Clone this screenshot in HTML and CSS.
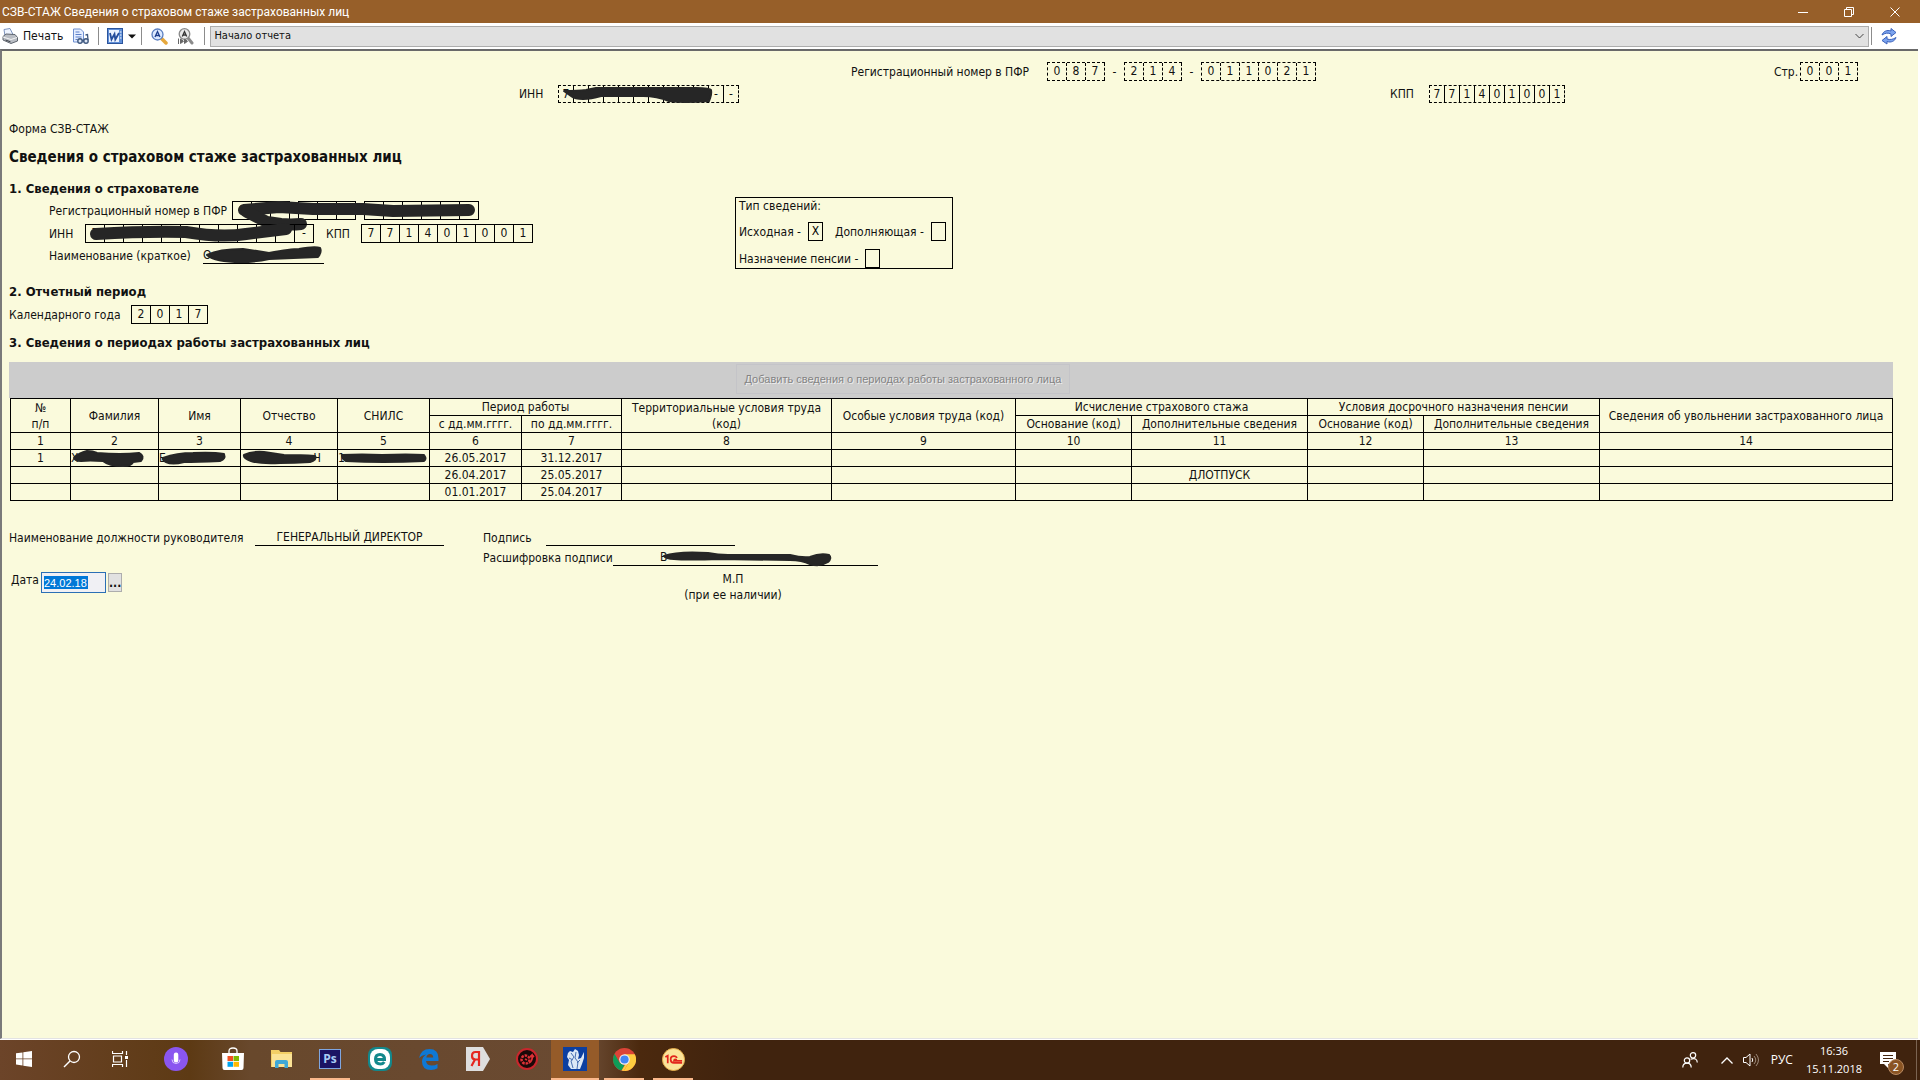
FILE: index.html
```html
<!DOCTYPE html>
<html lang="ru">
<head>
    <meta charset="UTF-8">
    <meta name="viewport" content="width=device-width, initial-scale=1.0">
    <title>СЗВ-СТАЖ Сведения о страховом стаже застрахованных лиц</title>
    <link rel="stylesheet" href="styles.css">
</head>
<body>
    <header class="titlebar">
        <h1>СЗВ-СТАЖ Сведения о страховом стаже застрахованных лиц</h1>
        <div class="window-buttons">
            <button type="button" aria-label="Свернуть"><svg width="12" height="12" viewBox="0 0 12 12"><path d="M1 6.500h10"/></svg></button>
            <button type="button" aria-label="Восстановить"><svg width="12" height="12" viewBox="0 0 12 12"><path d="M1.500 3.500h7v7h-7zM3.500 3.500v-2h7v7h-2"/></svg></button>
            <button type="button" aria-label="Закрыть"><svg width="12" height="12" viewBox="0 0 12 12"><path d="M1.500 1.500l9 9M10.500 1.500l-9 9"/></svg></button>
        </div>
    </header>

    <div class="toolbar">
        <button type="button" class="tool print">
            <svg width="16" height="16" viewBox="0 0 16 16">
                <path d="M3 8L2 1.500l6-1 3 6z" fill="#eef4ff" stroke="#7d93bd"/>
                <path d="M1 8.500L4 6l9 .5 2.500 3v3.500L9 15.500 1 12z" fill="#b9bdc4" stroke="#5f656e"/>
                <path d="M1 9l8 2.500 6-2" fill="none" stroke="#f4f4f4"/>
                <path d="M3.500 12l5 1.800" stroke="#3c4048"/>
            </svg>
            <span>Печать</span>
        </button>
        <button type="button" class="tool preview" aria-label="Просмотр">
            <svg width="17" height="17" viewBox="0 0 17 17">
                <path d="M1.500 1h7l3 3v10h-10z" fill="#e4edff" stroke="#6e8fd0"/>
                <path d="M3.500 4h4M3.500 6.500h6M3.500 9h6M3.500 11.500h2" stroke="#5b7fc9"/>
                <circle cx="8" cy="13" r="2.200" fill="#dfe8f6" stroke="#40597f" stroke-width="1.400"/>
                <circle cx="14" cy="13" r="2.200" fill="#dfe8f6" stroke="#40597f" stroke-width="1.400"/>
                <path d="M10 12.500h2M16 12l-.5-5.500-2 .5" fill="none" stroke="#40597f" stroke-width="1.300"/>
            </svg>
        </button>
        <span class="divider"></span>
        <button type="button" class="tool word" aria-label="Сохранить в Word">
            <svg width="16" height="16" viewBox="0 0 16 16">
                <rect x=".5" y=".5" width="15" height="15" fill="#5f8fd8" stroke="#2b549c"/>
                <rect x="2" y="2" width="10" height="12" fill="#eaf2ff"/>
                <path d="M3 5l1.500 6.500L7.500 6l.8 5.500L12 5" fill="none" stroke="#234c9c" stroke-width="1.800"/>
                <path d="M13 4h1.500M13 7h1.500M13 10h1.500" stroke="#fff"/>
            </svg>
            <svg class="arrow" width="8" height="5" viewBox="0 0 8 5"><path d="M0 .5h8L4 4.500z" fill="#111"/></svg>
        </button>
        <span class="divider"></span>
        <button type="button" class="tool find" aria-label="Найти">
            <svg width="17" height="17" viewBox="0 0 17 17">
                <path d="M10.500 10.500l4.500 4.500" stroke="#e6a83c" stroke-width="3.500" stroke-linecap="round"/>
                <circle cx="6.500" cy="6.500" r="5.500" fill="#dce9ff" stroke="#5c7fc0" stroke-width="1.300"/>
                <path d="M4 9L6.500 3.500 9 9M5 7.500h3" fill="none" stroke="#1c3d8c" stroke-width="1.300"/>
            </svg>
        </button>
        <button type="button" class="tool find" aria-label="Найти далее">
            <svg width="17" height="17" viewBox="0 0 17 17">
                <path d="M11 10l4 5" stroke="#8b8b8b" stroke-width="3" stroke-linecap="round"/>
                <circle cx="7.500" cy="6" r="5.300" fill="#e8e8e8" stroke="#888" stroke-width="1.300"/>
                <path d="M5.300 8.500l2.200-5 2.200 5M6 7h3" fill="none" stroke="#333" stroke-width="1.300"/>
                <path d="M1.500 10.500v5.500M3.500 11l3 2.300-3 2.200zM7.500 11l3 2.300-3 2.200z" fill="#666" stroke="#666"/>
            </svg>
        </button>
        <span class="divider"></span>
        <select class="report-part" aria-label="Раздел отчета">
            <option>Начало отчета</option>
        </select>
        <span class="divider"></span>
        <button type="button" class="tool refresh" aria-label="Обновить">
            <svg width="16" height="17" viewBox="0 0 16 17">
                <path d="M1 7C2 3.500 6 1.500 10 3V.500L15 4.500 10 8.500V6C7 4.500 4 5 1 7z" fill="#7ba3ee" stroke="#3c63bb"/>
                <path d="M15 9.500C14 13 10 15 6 13.500V16L1 12.500 6 8.500V11C9 12 12 11.500 15 9.500z" fill="#7ba3ee" stroke="#3c63bb"/>
            </svg>
        </button>
    </div>

    <main class="report">
        <div class="page-head first">
            <div class="field reg">
                <span class="label">Регистрационный номер в ПФР</span>
                <span class="cells dashed"><i>0</i><i>8</i><i>7</i></span>
                <span class="dash">-</span>
                <span class="cells dashed"><i>2</i><i>1</i><i>4</i></span>
                <span class="dash">-</span>
                <span class="cells dashed"><i>0</i><i>1</i><i>1</i><i>0</i><i>2</i><i>1</i></span>
            </div>
            <div class="field page-number">
                <span class="label">Стр.</span>
                <span class="cells dashed"><i>0</i><i>0</i><i>1</i></span>
            </div>
        </div>
        <div class="page-head second">
            <div class="field code">
                <span class="label">ИНН</span>
                <span class="cells dashed small"><i>7</i><i></i><i></i><i></i><i></i><i></i><i></i><i></i><i></i><i></i><i>-</i><i>-</i>
                    <svg class="scribble" width="180" height="18" viewBox="0 0 180 18"><path d="M5 5q14 0 22-1l10-2h100q14 0 15 2 1 4-2 11-26 2-40 0-12-5-26-5H42q-10 3-18 3-8 0-12-3z"/></svg>
                </span>
            </div>
            <div class="field code">
                <span class="label">КПП</span>
                <span class="cells dashed small"><i>7</i><i>7</i><i>1</i><i>4</i><i>0</i><i>1</i><i>0</i><i>0</i><i>1</i></span>
            </div>
        </div>

        <p class="form-name">Форма СЗВ-СТАЖ</p>
        <h2>Сведения о страховом стаже застрахованных лиц</h2>

        <section class="insurer">
            <div class="insurer-data">
                <h3>1. Сведения о страхователе</h3>
                <div class="field reg">
                    <span class="label">Регистрационный номер в ПФР</span>
                    <span class="cells"><i>0</i><i></i><i></i></span>
                    <span class="cells"><i></i><i></i><i></i></span>
                    <span class="cells"><i></i><i></i><i></i><i></i><i></i><i></i>
                        <svg class="scribble over-reg" width="246" height="30" viewBox="0 0 246 30">
                            <path class="line" d="M11 8L46 5 80 7 130 7 160 9 236 8" stroke-width="11"/>
                            <path class="line" d="M14 10l20 10 14 2q10 1 20 0" stroke-width="9"/>
                        </svg>
                    </span>
                </div>
                <div class="field codes">
                    <span class="label">ИНН</span>
                    <span class="cells"><i>7</i><i></i><i></i><i></i><i></i><i></i><i></i><i></i><i></i><i></i><i></i><i>-</i>
                        <svg class="scribble" width="228" height="19" viewBox="0 0 228 19">
                            <path class="line" d="M10 9q50-3 90-2 35 6 60 2l40-5" stroke-width="11"/>
                        </svg>
                    </span>
                    <span class="label">КПП</span>
                    <span class="cells"><i>7</i><i>7</i><i>1</i><i>4</i><i>0</i><i>1</i><i>0</i><i>0</i><i>1</i></span>
                </div>
                <div class="field short-name">
                    <span class="label">Наименование (краткое)</span>
                    <span class="underline">О
                        <svg class="scribble" width="121" height="17" viewBox="0 0 121 17"><path d="M4 8q12-6 36-6 14 2 26 4 22-4 30-4 16-3 21-1 2 4-2 9-26 1-49 2-14 3-28 3Q12 15 4 8z"/></svg>
                    </span>
                </div>
            </div>
            <fieldset class="info-type">
                <legend>Тип сведений:</legend>
                <div class="type-row">
                    <label for="type-initial">Исходная -</label>
                    <input type="checkbox" id="type-initial" checked>
                    <label for="type-extra">Дополняющая -</label>
                    <input type="checkbox" id="type-extra">
                </div>
                <div class="type-row">
                    <label for="type-pension">Назначение пенсии -</label>
                    <input type="checkbox" id="type-pension">
                </div>
            </fieldset>
        </section>

        <section class="period">
            <h3>2. Отчетный период</h3>
            <div class="field">
                <span class="label">Календарного года</span>
                <span class="cells"><i>2</i><i>0</i><i>1</i><i>7</i></span>
            </div>
        </section>

        <section class="work">
            <h3>3. Сведения о периодах работы застрахованных лиц</h3>
            <div class="add-bar">
                <button type="button" disabled>Добавить сведения о периодах работы застрахованного лица</button>
            </div>
            <table>
                <colgroup>
                    <col><col><col><col><col><col><col><col><col><col><col><col><col><col>
                </colgroup>
                <thead>
                    <tr>
                        <th rowspan="2">№<br>п/п</th>
                        <th rowspan="2">Фамилия</th>
                        <th rowspan="2">Имя</th>
                        <th rowspan="2">Отчество</th>
                        <th rowspan="2">СНИЛС</th>
                        <th colspan="2">Период работы</th>
                        <th rowspan="2">Территориальные условия труда<br>(код)</th>
                        <th rowspan="2">Особые условия труда (код)</th>
                        <th colspan="2">Исчисление страхового стажа</th>
                        <th colspan="2">Условия досрочного назначения пенсии</th>
                        <th rowspan="2">Сведения об увольнении застрахованного лица</th>
                    </tr>
                    <tr>
                        <th>с дд.мм.гггг.</th>
                        <th>по дд.мм.гггг.</th>
                        <th>Основание (код)</th>
                        <th>Дополнительные сведения</th>
                        <th>Основание (код)</th>
                        <th>Дополнительные сведения</th>
                    </tr>
                    <tr>
                        <th>1</th><th>2</th><th>3</th><th>4</th><th>5</th><th>6</th><th>7</th>
                        <th>8</th><th>9</th><th>10</th><th>11</th><th>12</th><th>13</th><th>14</th>
                    </tr>
                </thead>
                <tbody>
                    <tr>
                        <td>1</td>
                        <td class="hidden-name">Х
                            <svg class="scribble" width="88" height="20" viewBox="0 0 88 20"><path d="M3 8Q8 3 16 1q6 0 10 2 24 2 42 0 6 3 2 8l-8 1q-1 4-10 4-14 0-20-5-14-1-22 0-6 0-7-3z"/></svg>
                        </td>
                        <td class="hidden-name">Е
                            <svg class="scribble" width="81" height="20" viewBox="0 0 81 20"><path d="M4 8q14-5 30-5 20-1 31 1 2 5-4 7-24 1-36 1-12 3-18 0-4-2-3-4z"/></svg>
                        </td>
                        <td class="hidden-name end">Ч
                            <svg class="scribble" width="97" height="20" viewBox="0 0 97 20"><path d="M3 5q8-4 20-3l20 3q18 0 31 1 2 4-5 6-16 1-30 1-20 1-29-2-8-3-7-6z"/></svg>
                        </td>
                        <td class="hidden-name">1
                            <svg class="scribble" width="92" height="20" viewBox="0 0 92 20"><path d="M4 5q20-1 40 0 26-1 42 0 3 4 0 6-42 2-78 0-4-2-4-6z"/></svg>
                        </td>
                        <td>26.05.2017</td><td>31.12.2017</td>
                        <td></td><td></td><td></td><td></td><td></td><td></td><td></td>
                    </tr>
                    <tr>
                        <td></td><td></td><td></td><td></td><td></td>
                        <td>26.04.2017</td><td>25.05.2017</td>
                        <td></td><td></td><td></td><td>ДЛОТПУСК</td><td></td><td></td><td></td>
                    </tr>
                    <tr>
                        <td></td><td></td><td></td><td></td><td></td>
                        <td>01.01.2017</td><td>25.04.2017</td>
                        <td></td><td></td><td></td><td></td><td></td><td></td><td></td>
                    </tr>
                </tbody>
            </table>
        </section>

        <section class="signature">
            <div class="position">
                <div class="field">
                    <span class="label">Наименование должности руководителя</span>
                    <span class="underline">ГЕНЕРАЛЬНЫЙ ДИРЕКТОР</span>
                </div>
                <div class="field date">
                    <label for="date">Дата</label>
                    <input type="text" id="date" value="24.02.18">
                    <button type="button" aria-label="Выбрать дату">...</button>
                </div>
            </div>
            <div class="sign">
                <div class="field sign-line">
                    <span class="label">Подпись</span>
                    <span class="underline"></span>
                </div>
                <div class="field full-name">
                    <span class="label">Расшифровка подписи</span>
                    <span class="underline">В
                        <svg class="scribble" width="174" height="18" viewBox="0 0 174 18"><path d="M4 7q14-5 44-3 10 2 20 2h62q12 3 20 2 10-4 19-2 3 3-1 7-8 5-18 2-8-4-20-4l-70-1q-34 1-46 0Q6 10 4 7z"/></svg>
                    </span>
                </div>
                <p>М.П<br>(при ее наличии)</p>
            </div>
        </section>
    </main>

    <footer class="taskbar">
        <div class="apps">
            <button type="button" aria-label="Пуск"><svg width="16" height="16" viewBox="0 0 16 16"><path d="M0 2.300l6.500-.9v6.100H0zM7.300 1.300L16 0v7.500H7.300zM0 8.300h6.500v6.200L0 13.600zM7.300 8.300H16V16l-8.700-1.300z" fill="#fff"/></svg></button>
            <button type="button" aria-label="Поиск"><svg width="18" height="18" viewBox="0 0 18 18"><circle cx="11" cy="7" r="5.500" fill="none" stroke="#fff" stroke-width="1.300"/><path d="M7 11l-6 6" stroke="#fff" stroke-width="1.500"/></svg></button>
            <button type="button" aria-label="Представление задач"><svg width="17" height="16" viewBox="0 0 17 16"><path d="M.5 0v2.500h10V0M.5 16v-2.500h10V16M1.500 5h8v6h-8zM14.500 0v4M14.500 9v7" fill="none" stroke="#fff" stroke-width="1.200"/><path d="M13 5h3v3h-3z" fill="#fff"/></svg></button>
            <button type="button" class="voice" aria-label="Алиса"><svg width="24" height="24" viewBox="0 0 24 24"><circle cx="12" cy="12" r="12" fill="#8a56f0"/><rect x="9.800" y="5.500" width="4.500" height="10" rx="2.200" fill="#fff"/><path d="M8 12.500q0 4 4 4t4-4" fill="none" stroke="#d9c6ff"/></svg></button>
            <button type="button" aria-label="Магазин"><svg width="24" height="24" viewBox="0 0 24 24"><path d="M8 7V4q0-3 4-3t4 3v3" fill="none" stroke="#fff" stroke-width="1.300"/><path d="M1 6h22l-.5 15q0 2-2 2h-17q-2 0-2-2z" fill="#fff"/><path d="M6.500 9H12v5H6.500z" fill="#f25022"/><path d="M12.500 9H18v5h-5.500z" fill="#7fba00"/><path d="M6.500 14.800H12v5H6.500z" fill="#00a4ef"/><path d="M12.500 14.800H18v5h-5.500z" fill="#ffb900"/></svg></button>
            <button type="button" aria-label="Проводник"><svg width="22" height="20" viewBox="0 0 22 20"><path d="M0 1h8l1.500 2H21v15H0z" fill="#f3cf66"/><path d="M1 5h20v13H1z" fill="#fbe396"/><path d="M4 19v-6q0-2 2-2h9q2 0 2 2v6h-3.500v-4h-6v4z" fill="#3fa9d8"/></svg></button>
            <button type="button" class="running" aria-label="Photoshop"><span class="ps">Ps</span></button>
            <button type="button" aria-label="ESET"><svg width="24" height="24" viewBox="0 0 24 24"><rect width="24" height="24" rx="8" fill="#13888c"/><rect x="2" y="2" width="20" height="20" rx="8" fill="#fff"/><path d="M8 12.500h8.500Q16.500 7.500 12 7.500T7.500 12q0 5 5 5 2.500 0 3.800-2" fill="none" stroke="#13888c" stroke-width="3"/></svg></button>
            <button type="button" aria-label="Edge"><svg width="20" height="21" viewBox="0 0 20 21"><path d="M0 9Q2 0 10.500 0 19.500 0 19.500 9.500V12H7q.5 4.500 6 4.500 3 0 5.500-1.500v4.300Q16 21 12 21q-9 0-9-8.500Q3 8 7 5.500 2.500 6 0 9zM7.300 8.500h6.900q0-3.500-3.300-3.500-3 0-3.600 3.500z" fill="#0f78d4"/></svg></button>
            <button type="button" aria-label="Яндекс"><svg width="24" height="24" viewBox="0 0 24 24"><path d="M0 0h17l7 12-7 12H0z" fill="#dedede"/><path d="M13 19V5H9.500Q6 5 6 9q0 3.500 3.500 3.500H13M9 12.500L5.500 19" fill="none" stroke="#e52620" stroke-width="2.200"/></svg></button>
            <button type="button" aria-label="Игровой центр"><svg width="22" height="22" viewBox="0 0 22 22"><circle cx="11" cy="11" r="10" fill="#1b0909" stroke="#c9262c" stroke-width="2"/><circle cx="9.500" cy="11.500" r="4" fill="none" stroke="#dd3136" stroke-width="2.500" stroke-dasharray="2.500 1"/><path d="M9 11l2 1M13 15q4-2 3-8l-2 2M16 7l2 2" fill="none" stroke="#dd3136" stroke-width="1.800"/></svg></button>
            <button type="button" class="running active" aria-label="СЗВ-СТАЖ"><svg width="24" height="24" viewBox="0 0 24 24"><rect width="24" height="24" fill="#0c3fa0"/><path d="M5 6l2-2 3 1 2-3 3 2 1 4-1 4 3-1 2-4 1-2v6l-2 6-2 5H8L5 18l1-5-2-3z" fill="#dce8f6"/><path d="M8 6l3 4-3 4 2 7M13 5l-1 6 3 4-1 7M17 13l-3 3M6 11l4 2" fill="none" stroke="#496fb0"/></svg></button>
            <button type="button" class="running" aria-label="Chrome"><svg width="23" height="23" viewBox="0 0 24 24"><circle cx="12" cy="12" r="12" fill="#db4437"/><path d="M1.600 6L7 15.500l5 2.500-3 5.600A12 12 0 0 1 1.600 6z" fill="#0f9d58"/><path d="M12 6.500h10.700A12 12 0 0 1 11.300 24L17 14z" fill="#ffcd40"/><path d="M9 23.600L14 15l3-1-5.700 10z" fill="#ffcd40"/><circle cx="12" cy="12" r="5.500" fill="#f1f1f1"/><circle cx="12" cy="12" r="4.300" fill="#4285f4"/></svg></button>
            <button type="button" class="running" aria-label="1С"><svg width="23" height="23" viewBox="0 0 24 24"><circle cx="12" cy="12" r="11.500" fill="#fbe49a" stroke="#e8b04a"/><path d="M3.500 9.500L6 8v8M15.500 10.500Q15 8.500 12.500 8.500 9 8.500 9 12t3.500 3.500H21M15.500 12.500q-3-1.500-3 1H21" fill="none" stroke="#e2261c" stroke-width="1.800"/></svg></button>
        </div>
        <div class="tray">
            <svg class="people" width="16" height="16" viewBox="0 0 16 16"><g fill="none" stroke="#fff" stroke-width="1.200"><circle cx="5" cy="8.500" r="2.700"/><path d="M.8 15.500q0-4.300 4.200-4.300t4.200 4.300"/><circle cx="11" cy="3.300" r="2.700"/><path d="M8.500 7.200Q15 5 15.300 10.500"/></g></svg>
            <svg width="12" height="7" viewBox="0 0 12 7"><path d="M.5 6.500L6 1l5.500 5.500" fill="none" stroke="#fff" stroke-width="1.300"/></svg>
            <svg width="17" height="14" viewBox="0 0 17 14"><g fill="none" stroke="#fff"><path d="M.5 4.500h2.500L7 1v12L3 9.500H.5z"/><path d="M9 5q1.500 2 0 4"/><path d="M11 3q3.500 4 0 8M13 1q5 6 0 12" stroke="#9c8878"/></g></svg>
            <span class="lang">РУС</span>
            <time datetime="2018-11-15T16:36">16:36<br>15.11.2018</time>
            <button type="button" class="notice" aria-label="Уведомления">
                <svg width="16" height="16" viewBox="0 0 16 16"><path d="M0 0h16v12H8v4l-4-4H0z" fill="#fff"/><path d="M3 3.500h10M3 6.500h10M3 9.500h6" stroke="#45250e"/></svg>
                <span class="badge">2</span>
            </button>
        </div>
    </footer>
</body>
</html>
```
FILE: styles.css
```css
* {
    box-sizing: border-box;
}

body {
    margin: 0;
    min-height: 100vh;
    display: flex;
    flex-direction: column;
    background: #fff;
    color: #111;
    font-family: "DejaVu Sans Condensed", "DejaVu Sans", sans-serif;
    font-size: 12px;
    line-height: 16px;
}

h1, h2, h3, p {
    margin: 0;
}

button {
    padding: 0;
    border: 0;
    background: none;
    color: inherit;
    font: inherit;
}

svg {
    display: block;
}

/* window title */
.titlebar {
    display: flex;
    justify-content: space-between;
    align-items: center;
    height: 23px;
    padding: 0 2px;
    background: #975f29;
    color: #fff;
}

.titlebar h1 {
    font: 12px/16px Roboto, sans-serif;
}

.window-buttons {
    display: flex;
    height: 20px;
}

.window-buttons button {
    width: 46px;
    display: flex;
    justify-content: center;
    align-items: center;
}

.window-buttons svg {
    fill: none;
    stroke: #fff;
}

/* toolbar */
.toolbar {
    display: flex;
    align-items: center;
    height: 26px;
    padding-left: 2px;
}

.tool {
    display: flex;
    align-items: center;
    gap: 5px;
}

.preview {
    margin: 0 9px;
}

.divider {
    width: 1px;
    height: 18px;
    background: #8c8c8c;
}

.word {
    margin: 0 5px 0 8px;
}

.find {
    margin-left: 9px;
}

.find + .divider {
    margin: 0 5px 0 10px;
}

.report-part {
    flex: 1;
    height: 21px;
    margin-right: 2px;
    padding: 0 3px;
    border: 1px solid #adadad;
    border-radius: 0;
    appearance: none;
    background: #e1e1e1 url("data:image/svg+xml,%3Csvg xmlns='http://www.w3.org/2000/svg' width='9' height='6'%3E%3Cpath d='M.5 1l4 4 4-4' fill='none' stroke='%23444'/%3E%3C/svg%3E") no-repeat right 4px center;
    color: #111;
    font: inherit;
    font-size: 11px;
}

.refresh {
    margin: 0 23px 0 9px;
}

/* report sheet */
.report {
    flex: 1;
    margin-right: 2px;
    padding: 11px 25px 0 7px;
    border-left: 2px solid #7a7a7a;
    border-top: 2px solid #696969;
    border-bottom: 1px solid #e3e3e3;
    background: #fafadc;
}

.page-head {
    display: grid;
    margin-bottom: 4px;
}

.page-head.first {
    grid-template-columns: 842fr 923fr 119fr;
}

.page-head.second {
    grid-template-columns: 510fr 871fr 503fr;
}

.page-head .field:first-child {
    grid-column: 2;
}

.field {
    display: flex;
    align-items: center;
}

.cells {
    position: relative;
    display: flex;
    height: 19px;
    border: 1px solid #000;
    border-right: 0;
}

.cells i {
    width: 19px;
    border-right: 1px solid #000;
    font-style: normal;
    line-height: 17px;
    text-align: center;
}

.cells.small {
    height: 18px;
}

.cells.small i {
    width: 15px;
}

.dashed,
.dashed i:last-of-type,
.dashed:not(.small) i {
    border-style: dashed;
}

.dashed i,
.dashed i:last-of-type,
.dashed:not(.small) i {
    border-width: 0 1px 0 0;
}

.dash {
    width: 19px;
    text-align: center;
}

.page-head .reg .label {
    width: 196px;
}

.page-number .label {
    width: 26px;
}

.code .label {
    width: 39px;
}

.scribble {
    position: absolute;
    top: 0;
    left: 0;
    fill: #262626;
    stroke: #262626;
    stroke-width: 2px;
    stroke-linejoin: round;
    overflow: visible;
}

.scribble .line {
    fill: none;
    stroke-width: 12px;
    stroke-linecap: round;
}

.form-name {
    margin-top: 18px;
}

h2 {
    margin-top: 10px;
    font-size: 15px;
    line-height: 20px;
}

h3 {
    font-size: 13px;
    line-height: 16px;
}

/* 1. insurer */
.insurer {
    display: flex;
    align-items: flex-start;
    margin-top: 14px;
}

.insurer-data {
    width: 726px;
}

.insurer-data .field {
    margin: 4px 0 0 40px;
}

.insurer-data .reg .label {
    width: 183px;
}

.insurer-data .reg .cells + .cells {
    margin-left: 8px;
}

.over-reg {
    left: auto;
    right: 0;
}

.codes .label {
    width: 36px;
}

.codes .cells + .label {
    width: 35px;
    margin-left: 12px;
}

.short-name .label {
    width: 154px;
}

.underline {
    position: relative;
    height: 17px;
    border-bottom: 1px solid #000;
    text-align: center;
}

.short-name .underline {
    width: 121px;
    text-align: left;
}

.info-type {
    width: 218px;
    margin: 16px 0 0;
    padding: 0 3px;
    border: 1px solid #000;
}

.info-type legend {
    float: left;
    width: 100%;
    padding: 0;
}

.type-row {
    clear: both;
    display: flex;
    align-items: center;
    padding-top: 8px;
}

.type-row input {
    width: 15px;
    height: 19px;
    margin: 0 12px 0 7px;
    border: 1px solid #000;
    appearance: none;
    font: inherit;
    line-height: 17px;
    text-align: center;
}

.type-row input:checked::before {
    content: "X";
}

.type-row input:last-child {
    margin-right: 0;
}

/* 2. period */
.period {
    margin-top: 15px;
}

.period .field {
    margin-top: 5px;
}

.period .label {
    width: 122px;
}

/* 3. periods table */
.work {
    margin-top: 11px;
}

.add-bar {
    display: flex;
    justify-content: center;
    height: 36px;
    margin-top: 11px;
    padding: 2px 96px 4px 0;
    background: #ccc;
}

.add-bar button {
    padding: 0 8px;
    border: 1px solid #c4c4c8;
    color: #838383;
    font: 11px "Liberation Sans", sans-serif;
    text-shadow: 1px 1px #eee;
}

table {
    width: calc(100% - 1px);
    margin-left: 1px;
    table-layout: fixed;
    border-collapse: collapse;
}

col:nth-child(1) { width: 60px; }
col:nth-child(2) { width: 88px; }
col:nth-child(3) { width: 82px; }
col:nth-child(4) { width: 97px; }
col:nth-child(5) { width: 92px; }
col:nth-child(6) { width: 92px; }
col:nth-child(7) { width: 100px; }
col:nth-child(8) { width: 210px; }
col:nth-child(9) { width: 184px; }
col:nth-child(10) { width: 116px; }
col:nth-child(11) { width: 176px; }
col:nth-child(12) { width: 116px; }
col:nth-child(13) { width: 176px; }
col:nth-child(14) { width: 293px; }

th, td {
    height: 17px;
    padding: 0;
    border: 1px solid #000;
    font-weight: normal;
    text-align: center;
    white-space: nowrap;
}

.hidden-name {
    position: relative;
    text-align: left;
}

.hidden-name.end {
    padding-right: 16px;
    text-align: right;
}

/* signature */
.signature {
    display: flex;
    margin-top: 28px;
}

.position {
    width: 474px;
}

.position .label {
    width: 246px;
}

.position .underline {
    width: 189px;
}

.sign-line .label {
    width: 63px;
}

.sign-line .underline {
    width: 189px;
}

.full-name {
    margin-top: 3px;
}

.full-name .label {
    width: 130px;
}

.full-name .underline {
    width: 265px;
    padding-left: 47px;
    text-align: left;
}

.full-name .scribble {
    left: 47px;
}

.sign p {
    width: 500px;
    margin-top: 5px;
    text-align: center;
}

.date {
    align-items: flex-start;
    margin-top: 26px;
    padding-left: 2px;
}

.date label {
    width: 30px;
}

.date input {
    width: 65px;
    height: 21px;
    padding: 0 2px;
    border: 1px solid #2b6fb5;
    background: #f0f0f4 linear-gradient(#0078d7, #0078d7) no-repeat 2px 3px / 44px 13px;
    color: #fff;
    font: 11px "Liberation Sans", sans-serif;
}

.date button {
    width: 14px;
    height: 19px;
    margin: 1px 0 0 2px;
    border: 1px solid #adadad;
    background: #e1e1e1;
    font-weight: bold;
}

/* taskbar */
.taskbar {
    display: flex;
    justify-content: space-between;
    height: 40px;
    margin-top: 1px;
    background: linear-gradient(90deg, #6c4429, #5d3a14 190px, #68482c 250px, #6a4a32 590px, #4b290e 640px, #40230e 740px, #40230e);
    color: #fff;
    font-family: "Open Sans", sans-serif;
}

.apps {
    display: flex;
}

.apps button {
    width: 49px;
    display: flex;
    justify-content: center;
    align-items: center;
    border-bottom: 2px solid transparent;
}

.apps button:nth-child(-n+3) {
    width: 48px;
}

.apps .voice {
    width: 64px;
}

.apps .running {
    width: 40px;
    margin: 0 5px 0 4px;
    border-bottom-color: #fbb98c;
}

.apps .active {
    width: 48px;
    margin: 0 1px 0 0;
    background: #955b29;
}

.ps {
    width: 22px;
    border: 1px solid #7fa6e0;
    background: #1b1464;
    color: #a9cdf5;
    font-weight: bold;
    line-height: 18px;
}

.tray {
    display: flex;
    align-items: center;
    margin-right: 3px;
    border-right: 1px solid #7b6452;
}

.people {
    margin-right: 23px;
}

.tray svg + svg + svg {
    margin-left: 10px;
}

.lang {
    margin-left: 11px;
}

time {
    margin: 0 18px 0 13px;
    font-size: 11px;
    line-height: 18px;
    text-align: center;
}

.notice {
    position: relative;
    margin-right: 20px;
}

.badge {
    position: absolute;
    top: 7px;
    left: 8px;
    width: 16px;
    height: 16px;
    border: 1px solid #b98a62;
    border-radius: 50%;
    background: #8a5423;
    font-size: 11px;
    line-height: 14px;
}
```
